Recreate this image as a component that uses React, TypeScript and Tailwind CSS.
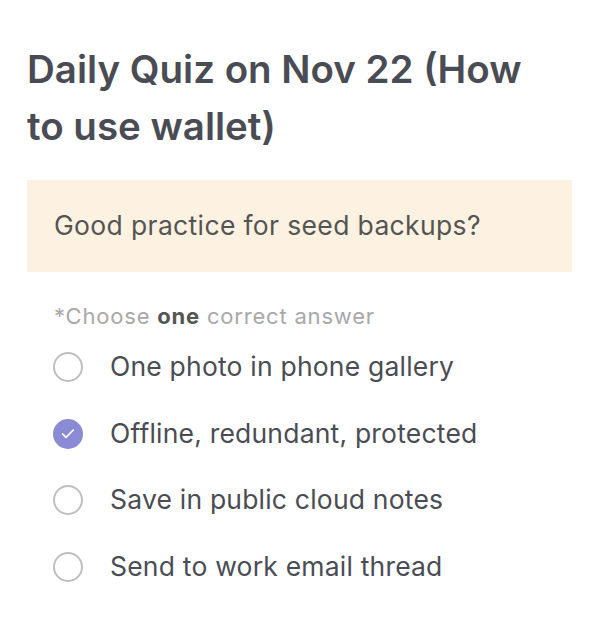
import { Check } from 'lucide-react';

const options = [
    { label: 'One photo in phone gallery', checked: false },
    { label: 'Offline, redundant, protected', checked: true },
    { label: 'Save in public cloud notes', checked: false },
    { label: 'Send to work email thread', checked: false },
];

const App = () => {
    return (
        <div className="min-h-screen bg-white font-['Inter',sans-serif] px-[27px] pt-[41px]">
            <h1 className="w-[520px] text-[38.5px] leading-[57px] font-semibold text-[#4a4c54]">
                Daily Quiz on Nov 22 (How to use wallet)
            </h1>

            <div className="mt-[25px] w-[545px] h-[92px] bg-[#fdf2e1] flex items-center px-[27px]">
                <p className="text-[26.5px] tracking-[0.35px] text-[#545454]">Good practice for seed backups?</p>
            </div>

            <p className="mt-[30px] pl-[27px] text-[22px] tracking-[0.8px] leading-[28px] text-[#a8a8a8]">
                *Choose <span className="font-bold text-[#555555]">one</span> correct answer
            </p>

            <div className="mt-[4px] flex flex-col">
                {options.map((opt) => (
                    <div key={opt.label} className="flex items-center h-[66.5px] pl-[26px]">
                        {opt.checked ? (
                            <div className="w-[30px] h-[30px] rounded-full bg-[#8a8bd4] flex items-center justify-center">
                                <Check size={16} strokeWidth={2.5} className="text-white" />
                            </div>
                        ) : (
                            <div className="w-[30px] h-[30px] rounded-full border-2 border-[#bfbfbf]" />
                        )}
                        <span className="ml-[27px] text-[26.5px] tracking-[0.2px] text-[#4a4c54]">{opt.label}</span>
                    </div>
                ))}
            </div>
        </div>
    );
};

export default App;
